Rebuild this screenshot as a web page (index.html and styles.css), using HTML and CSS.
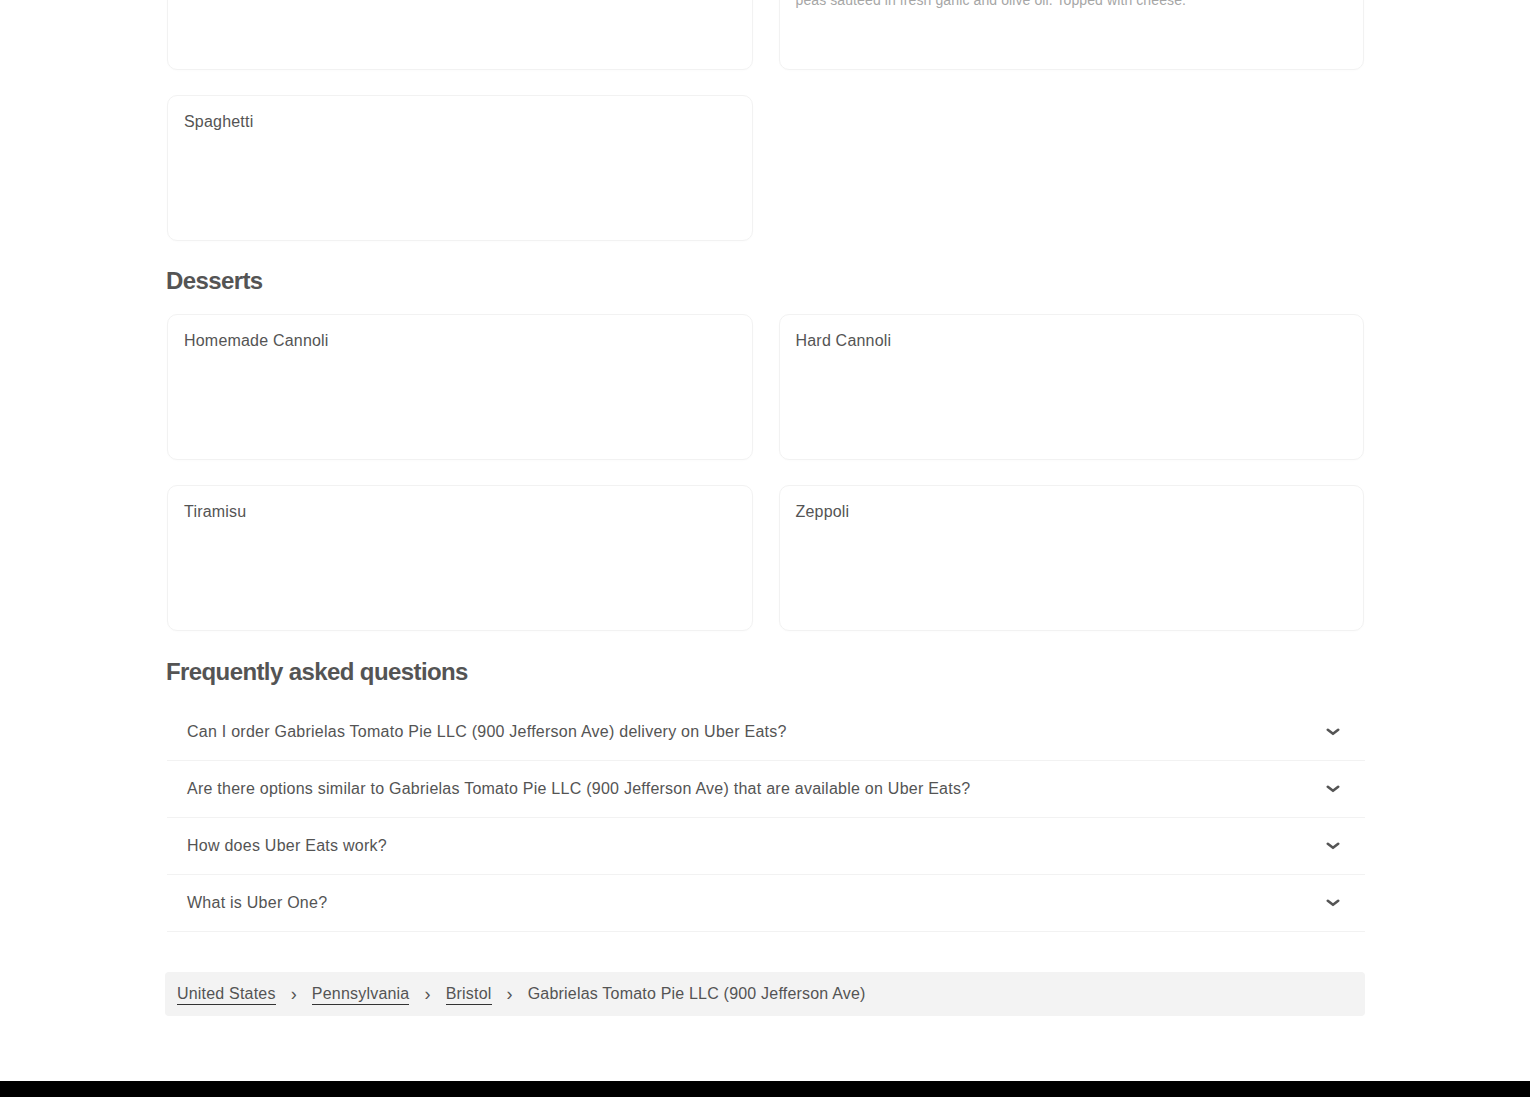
FILE: index.html
```html
<!DOCTYPE html>
<html lang="en">
<head>
  <meta charset="UTF-8" />
  <meta name="viewport" content="width=device-width, initial-scale=1" />
  <title>Gabrielas Tomato Pie LLC (900 Jefferson Ave)</title>
  <link rel="stylesheet" href="styles.css">
</head>
<body>
  <main class="page">
    <!-- Pasta (scrolled past) -->
    <div class="menu-grid menu-grid--cut">
      <div class="item-card">
        <div class="item-title">Baked Ziti</div>
      </div>
      <div class="item-card">
        <div class="item-title">Cavatelli &amp; Peas</div>
        <div class="item-desc">Cavatelli pasta tossed with broccoli florets and sweet<br>
          peas sauteed in fresh garlic and olive oil. Topped with cheese.</div>
      </div>
      <div class="item-card">
        <div class="item-title">Spaghetti</div>
      </div>
    </div>

    <h2 class="section-title">Desserts</h2>
    <div class="menu-grid">
      <div class="item-card">
        <div class="item-title">Homemade Cannoli</div>
      </div>
      <div class="item-card">
        <div class="item-title">Hard Cannoli</div>
      </div>
      <div class="item-card">
        <div class="item-title">Tiramisu</div>
      </div>
      <div class="item-card">
        <div class="item-title">Zeppoli</div>
      </div>
    </div>

    <h2 class="section-title section-title--faq">Frequently asked questions</h2>
    <ul class="faq">
      <li class="faq-row">
        <span>Can I order Gabrielas Tomato Pie LLC (900 Jefferson Ave) delivery on Uber Eats?</span>
        <svg class="chev" viewBox="0 0 14 8" width="14" height="8"><path d="M1.8 1.8 7 5.8l5.2-4" /></svg>
      </li>
      <li class="faq-row">
        <span>Are there options similar to Gabrielas Tomato Pie LLC (900 Jefferson Ave) that are available on Uber Eats?</span>
        <svg class="chev" viewBox="0 0 14 8" width="14" height="8"><path d="M1.8 1.8 7 5.8l5.2-4" /></svg>
      </li>
      <li class="faq-row">
        <span>How does Uber Eats work?</span>
        <svg class="chev" viewBox="0 0 14 8" width="14" height="8"><path d="M1.8 1.8 7 5.8l5.2-4" /></svg>
      </li>
      <li class="faq-row">
        <span>What is Uber One?</span>
        <svg class="chev" viewBox="0 0 14 8" width="14" height="8"><path d="M1.8 1.8 7 5.8l5.2-4" /></svg>
      </li>
    </ul>

    <nav class="crumbs">
      <a href="#">United States</a>
      <span class="sep">›</span>
      <a href="#">Pennsylvania</a>
      <span class="sep">›</span>
      <a href="#">Bristol</a>
      <span class="sep">›</span>
      <span>Gabrielas Tomato Pie LLC (900 Jefferson Ave)</span>
    </nav>
  </main>

  <footer class="site-footer"></footer>
</body>
</html>
```

FILE: styles.css
```css
:root {
  --text: #545454;
  --muted: #a6a6a6;
  --line: #f2f2f2;
  --crumb-bg: #f3f3f3;
}

body {
  margin: 0;
  background: #fff;
  color: var(--text);
  font-family: "Liberation Sans", Arial, sans-serif;
  font-size: 16px;
  overflow: hidden;
}

.page {
  width: 1200px;
  margin: 0 auto;
}

.menu-grid {
  display: grid;
  grid-template-columns: 1fr 1fr;
  gap: 25px 26px;
  padding: 0 1px 0 2px;
}

/* page is scrolled, first row sits above the fold */
.menu-grid--cut {
  margin-top: -76px;
}

.item-card {
  height: 146px;
  box-sizing: border-box;
  border: 1px solid var(--line);
  border-radius: 10px;
  padding: 16px 16px;
  box-shadow: 0 1px 2px rgba(0, 0, 0, 0.015);
}

.item-title {
  line-height: 20px;
  letter-spacing: 0.2px;
}

.item-desc {
  margin-top: 9px;
  font-size: 14px;
  line-height: 20px;
  color: var(--muted);
  letter-spacing: 0.1px;
}

.section-title {
  margin: 24px 1px 17px;
  font-size: 24px;
  line-height: 32px;
  font-weight: 700;
  letter-spacing: -0.6px;
}

.section-title--faq {
  margin-top: 25px;
  margin-bottom: 16px;
}

.faq {
  list-style: none;
  margin: 0;
  padding: 0 0 0 2px;
}

.faq-row {
  display: flex;
  align-items: center;
  justify-content: space-between;
  height: 57px;
  box-sizing: border-box;
  padding: 0 25px 0 20px;
  border-bottom: 1px solid var(--line);
  line-height: 20px;
  letter-spacing: 0.25px;
}

.chev {
  fill: none;
  stroke: #555;
  stroke-width: 2.6;
  stroke-linecap: round;
  stroke-linejoin: round;
}

.crumbs {
  display: flex;
  align-items: center;
  gap: 13px;
  height: 44px;
  margin-top: 40px;
  padding: 0 12px;
  background: var(--crumb-bg);
  border-radius: 4px;
  line-height: 20px;
  letter-spacing: 0.2px;
}

.crumbs a {
  color: var(--text);
  text-decoration: none;
  border-bottom: 1px solid #333;
}

.crumbs .sep {
  font-size: 18px;
  padding: 0 2px;
}

.site-footer {
  margin-top: 65px;
  height: 200px;
  background: #000;
}
```
